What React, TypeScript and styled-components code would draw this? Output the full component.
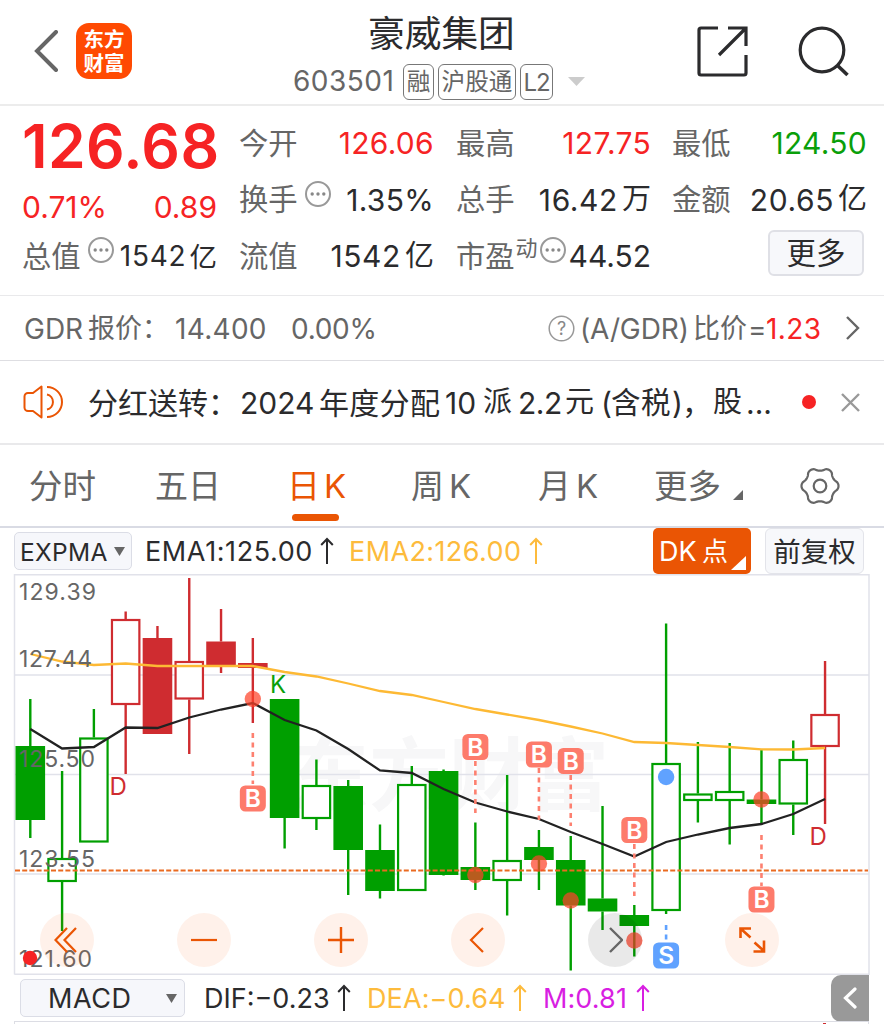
import React from 'react';
import styled, { createGlobalStyle } from 'styled-components';

const RED = '#f62324';
const GREEN = '#0a9f0a';
const ORANGE = '#ea5504';
const GREY = '#666';
const INK = '#2b2b2d';
const YELLOW = '#fdbb3c';

const Global = createGlobalStyle`
  body {
    margin: 0;
    background: #fff;
    overflow: hidden;
    font-family: Inter, "Noto Sans CJK SC", sans-serif;
    color: ${INK};
  }
  * { box-sizing: border-box; }
  svg { display: block; flex: none; }
`;

const Screen = styled.main`
  width: 884px;
  height: 1024px;
  overflow: hidden;
  display: flex;
  flex-direction: column;
  background: #fff;
`;

const Run = styled.span<{ $w?: number; $size: number; $ls?: number; $color?: string; $weight?: number; $drop?: number }>`
  display: block;
  flex: none;
  width: ${p => (p.$w ? `${p.$w}px` : 'auto')};
  margin-top: ${p => (p.$drop ?? 0) * 2}px;
  font-size: ${p => p.$size}px;
  line-height: 1.2;
  letter-spacing: ${p => p.$ls ?? 0}px;
  color: ${p => p.$color ?? 'inherit'};
  font-weight: ${p => p.$weight ?? 400};
  white-space: nowrap;
`;

/* Header */
const Header = styled.header`
  height: 106px;
  flex: none;
  display: grid;
  grid-template-columns: 290px 1fr 290px;
  border-bottom: 2px solid #ececec;
`;
const HeaderLeft = styled.div`
  display: flex;
  align-items: center;
  padding-left: 34px;
  gap: 17px;
  height: 102px;
`;
const Logo = styled.div`
  width: 56px;
  height: 56px;
  border-radius: 13px;
  background: #ff4a02;
  color: #fff;
  font-size: 20.5px;
  font-weight: 700;
  line-height: 23.5px;
  padding-top: 5px;
  text-align: center;
`;
const HeaderTitle = styled.div`
  display: flex;
  flex-direction: column;
  padding-top: 12px;
`;
const StockName = styled.h1`
  margin: 0 0 0 78px;
  font-size: 36.7px;
  line-height: 44px;
  font-weight: 400;
  white-space: nowrap;
`;
const CodeRow = styled.div`
  display: flex;
  align-items: center;
  margin: 7px 0 0 3px;
  height: 37px;
`;
const Tag = styled.span<{ $w: number; $latin?: boolean }>`
  width: ${p => p.$w}px;
  height: 36px;
  flex: none;
  margin-right: 4px;
  border: 1.5px solid #777;
  border-radius: 6px;
  color: ${GREY};
  font-size: ${p => (p.$latin ? 24 : 23.6)}px;
  line-height: ${p => (p.$latin ? 35 : 34)}px;
  letter-spacing: ${p => (p.$latin ? -1 : 0)}px;
  display: flex;
  justify-content: center;
  white-space: nowrap;
`;
const HeaderRight = styled.div`
  display: flex;
  align-items: center;
  justify-content: flex-end;
  gap: 50px;
  padding-right: 35px;
  height: 103px;
`;

/* Quote */
const Quote = styled.section`
  height: 190px;
  flex: none;
  display: grid;
  grid-template-columns: 195px 194px 194px 193px;
  column-gap: 23px;
  padding: 9px 0 0 22px;
  border-bottom: 1.5px solid #e9e9eb;
`;
const QuoteColumn = styled.div<{ $pull?: number }>`
  display: flex;
  flex-direction: column;
  margin-left: ${p => -(p.$pull ?? 0)}px;
`;
const QuoteRow = styled.div<{ $h?: number }>`
  height: ${p => p.$h ?? 56.5}px;
  display: flex;
  align-items: center;
  justify-content: space-between;
`;
const Group = styled.div<{ $gap?: number }>`
  display: flex;
  align-items: center;
  gap: ${p => p.$gap ?? 0}px;
`;
const Raised = styled.span<{ $up: number; $ml?: number }>`
  display: flex;
  align-items: center;
  margin: 0 0 ${p => p.$up}px ${p => p.$ml ?? 0}px;
`;
const MoreButton = styled.button`
  width: 96px;
  height: 46px;
  margin: -7px 3px 0 auto;
  padding: 0;
  border: 2px solid #dfe0e6;
  border-radius: 6px;
  background: #f7f8fb;
  font: 400 29.5px/42px Inter, "Noto Sans CJK SC", sans-serif;
  color: ${INK};
`;

/* Rows below the quote */
const Gdr = styled.section`
  height: 65px;
  flex: none;
  display: flex;
  align-items: center;
  padding-left: 24px;
  color: ${GREY};
  border-bottom: 1.5px solid #dedee2;
`;
const Notice = styled.section`
  height: 84px;
  flex: none;
  display: flex;
  align-items: center;
  padding-left: 23px;
  border-bottom: 2px solid #e9e9eb;
`;
const RedDot = styled.i`
  width: 14px;
  height: 14px;
  flex: none;
  border-radius: 50%;
  background: ${RED};
`;
const Tabs = styled.nav`
  height: 83px;
  flex: none;
  display: flex;
  align-items: center;
  padding-left: 29px;
  border-bottom: 2px solid #d9dbe4;
`;
const Tab = styled.a<{ $w: number; $active?: boolean }>`
  position: relative;
  width: ${p => p.$w}px;
  height: 81px;
  padding-top: 2px;
  flex: none;
  display: flex;
  align-items: center;
  color: ${p => (p.$active ? ORANGE : GREY)};
`;
const Underline = styled.i`
  position: absolute;
  left: 5px;
  bottom: 5px;
  width: 47px;
  height: 7px;
  border-radius: 4px;
  background: ${ORANGE};
`;

/* Indicator bars */
const IndicatorBar = styled.div`
  height: 46px;
  flex: none;
  display: flex;
  align-items: center;
  padding-left: 14px;
`;
const Picker = styled.div<{ $w: number; $pad: number }>`
  width: ${p => p.$w}px;
  height: 38px;
  flex: none;
  display: flex;
  align-items: center;
  padding-left: ${p => p.$pad}px;
  border: 1.5px solid #dbdde6;
  border-radius: 5px;
  background: #f6f7fb;
`;
const DkButton = styled.div`
  position: relative;
  width: 98px;
  height: 46px;
  flex: none;
  display: flex;
  align-items: center;
  padding-left: 6px;
  border-radius: 5px;
  background: ${ORANGE};
  color: #fff;
`;
const Corner = styled.span`
  position: absolute;
  right: 5px;
  bottom: 4px;
`;
const AdjustButton = styled.div`
  width: 99px;
  height: 46px;
  flex: none;
  margin-left: 14px;
  display: flex;
  align-items: center;
  justify-content: center;
  border: 1.5px solid #e3e4ea;
  border-radius: 6px;
  background: #f7f8fb;
`;
const ChartArea = styled.section`
  position: relative;
  height: 401px;
  flex: none;
`;
const Controls = styled.div`
  position: absolute;
  left: 40px;
  top: 339px;
  display: flex;
  gap: 83px;
`;
const RoundButton = styled.span<{ $muted?: boolean }>`
  width: 54px;
  height: 54px;
  border-radius: 50%;
  display: flex;
  align-items: center;
  justify-content: center;
  background: ${p => (p.$muted ? 'rgba(0,0,0,.085)' : 'rgba(250,100,20,.09)')};
`;
const MacdBar = styled.div`
  height: 46px;
  flex: none;
  display: flex;
  align-items: center;
  padding-left: 20px;
`;
const SideHandle = styled.div`
  width: 38px;
  height: 47px;
  margin-left: auto;
  margin-right: 15px;
  flex: none;
  display: flex;
  align-items: center;
  justify-content: center;
  border-radius: 10px 0 0 10px;
  background: #999;
`;
const SubChart = styled.div`
  margin: 0 15px 0 14px;
  height: 6px;
  border: 1.5px solid #dcdde4;
  border-bottom: 0;
  padding-left: 808px;
`;
const Spike = styled.i`
  display: block;
  width: 3px;
  height: 2px;
  margin-top: 1px;
  background: #cf2c30;
`;
const Space = styled.i<{ $w: number }>`
  width: ${p => p.$w}px;
  flex: none;
`;

const Ellipsis = () => (
  <svg width="26" height="26" viewBox="0 0 26 26">
    <circle cx="13" cy="13" r="12" fill="none" stroke="#999" strokeWidth="2" />
    {[7.2, 13, 18.8].map(x => <circle key={x} cx={x} cy="13" r="1.7" fill="#888" />)}
  </svg>
);

const Up = ({ color }: { color: string }) => (
  <svg width="14" height="28" viewBox="0 0 14 28" fill="none" stroke={color} strokeWidth="2">
    <path d="M7 27V2M1.200 8L7 2l5.800 6" />
  </svg>
);

const Down = ({ w, h, color = '#666' }: { w: number; h: number; color?: string }) => (
  <svg width={w} height={h}><path d={`M0 0H${w}L${w / 2} ${h}Z`} fill={color} /></svg>
);

const gearPath = () => {
  const pts: string[] = [];
  for (let i = 0; i < 120; i++) {
    const t = (i / 120) * Math.PI * 2;
    const c = Math.cos(6 * t);
    const r = 16.9 + 1.6 * Math.sign(c) * Math.pow(Math.abs(c), 0.7);
    pts.push(`${(20 + r * Math.cos(t)).toFixed(2)} ${(20 + r * Math.sin(t)).toFixed(2)}`);
  }
  return `M${pts.join('L')}Z`;
};

/* Chart */
type Candle = [high: number, top: number, bottom: number, low: number, filled: boolean, rising?: boolean];
const candles: Candle[] = [
  [699, 746, 820, 838, true],
  [771, 858, 882, 931, false],
  [709, 737.5, 842.5, 842, false],
  [611.5, 619, 705, 774, false, true],
  [626, 638, 734, 734, true, true],
  [578, 661, 699.5, 754, false, true],
  [609, 641.5, 666, 673, true, true],
  [638, 663, 668, 723, true, true],
  [699, 699, 818, 848.5, true],
  [759.5, 785, 819, 830, false],
  [780, 786, 850, 895, true],
  [824.5, 850, 891, 898.5, true],
  [766, 784, 891, 891, false],
  [769.5, 771, 875, 875.5, true],
  [822.5, 867, 880, 890, true],
  [775, 860, 881, 915.5, false],
  [830, 847, 860, 890, true],
  [836, 860, 905.5, 970.5, true],
  [806, 898.5, 911.5, 930, true],
  [905, 915, 926, 956.5, true],
  [623.5, 763, 911, 914, false],
  [742, 793.5, 801, 822.5, false],
  [743, 791, 801, 844.5, false],
  [750, 799.5, 804, 823, true],
  [740.5, 759, 804.5, 835, false],
  [661, 714, 747, 824, false, true],
];
const ema1 = [729, 748.5, 747, 727.5, 728, 717.5, 709.5, 703, 720, 730.5, 749, 770.5, 773, 789, 802.5, 811.5, 819, 832, 844, 856.5, 842, 834.5, 828, 824, 814, 799];
const ema2 = [654, 661.5, 665, 663.5, 666, 666, 666, 666, 672, 676.5, 683.5, 691, 695, 702, 709, 714.5, 720, 726.5, 733.5, 742, 743, 745, 747, 749.3, 749.5, 748];
const cx = (i: number) => 30.3 + i * 31.79;
const line = (ys: number[]) => ys.map((y, i) => `${cx(i)},${y}`).join(' ');

/* [candle index, badge centre, dash start, dash end, dot centre] */
const buys: [number, number, number, number, number][] = [
  [7, 798.5, 733, 784, 699],
  [14, 747, 761, 813, 875],
  [16, 754.5, 768, 820, 863.5],
  [17, 761, 775, 826, 900.5],
  [19, 830, 844, 896, 940.5],
  [23, 899.5, 835, 886, 799.5],
];

const Badge = ({ x, y, color, label }: { x: number; y: number; color: string; label: string }) => (
  <g>
    <rect x={x - 13} y={y - 13} width="26" height="26" rx="5.500" fill={color} />
    <text x={x} y={y + 8.7} textAnchor="middle" fontSize="24.500" fontWeight="600" fill="#fff">{label}</text>
  </g>
);

const Chart = () => (
  <svg width="884" height="401" viewBox="0 574 884 401" fontFamily='Inter, "Noto Sans CJK SC", sans-serif'>
    <text x="289" y="804" fontSize="80" fontWeight="700" textLength="320" fill="#f7f7f8">东方财富</text>
    <g stroke="#e1e2ea" strokeWidth="1.500" fill="none">
      <path d="M14.500 974.500V574.700H869V974.300H14.500M14.500 675H869M14.500 774.500H869M14.500 874H869" />
    </g>
    {candles.map(([high, top, bottom, low, filled, rising], i) => {
      const color = rising ? '#cf2c30' : '#009f00';
      const x = cx(i);
      return (
        <g key={i} stroke={color} strokeWidth="2.400">
          <path d={`M${x} ${high}V${top}M${x} ${bottom}V${Math.max(low, bottom)}`} />
          {filled
            ? <rect x={x - 14.8} y={top} width="29.600" height={bottom - top} fill={color} stroke="none" />
            : <rect x={x - 13.7} y={top + 1} width="27.400" height={bottom - top - 2} fill="#fff" strokeWidth="2.200" />}
        </g>
      );
    })}
    <polyline points={line(ema2)} fill="none" stroke="#fdb934" strokeWidth="2.300" />
    <polyline points={line(ema1)} fill="none" stroke="#222" strokeWidth="2.300" />
    <path d="M15 870.500H868" stroke="#ea6a20" strokeWidth="2" strokeDasharray="5 2.200" />
    {buys.map(([i, badge, from, to, dot]) => (
      <g key={i}>
        <path d={`M${cx(i)} ${from}V${to}`} stroke="#fd8070" strokeWidth="2.600" strokeDasharray="5 4.500" />
        <circle cx={cx(i)} cy={dot} r="8.200" fill="rgba(253,66,42,.72)" />
        <Badge x={cx(i)} y={badge} color="#fd7b6b" label="B" />
      </g>
    ))}
    <path d={`M${cx(20)} 925V940`} stroke="#60a2ff" strokeWidth="2.600" strokeDasharray="5 4.500" />
    <circle cx={cx(20)} cy="777" r="8.200" fill="#60a2ff" />
    <Badge x={cx(20)} y={955.5} color="#60a2ff" label="S" />
    <g fontSize="24">
      <text x="270" y="693" fill={GREEN}>K</text>
      <text x="109.500" y="794.500" fill="#cf2c30">D</text>
      <text x="809.500" y="844.500" fill="#cf2c30">D</text>
    </g>
    <g fontSize="23" fill="#666">
      <text x="19" y="600" textLength="77">129.39</text>
      <text x="19" y="667" textLength="73">127.44</text>
      <text x="19" y="767" textLength="76">125.50</text>
      <text x="19" y="867" textLength="76">123.55</text>
      <text x="19" y="966.500" textLength="73">121.60</text>
    </g>
    <circle cx="30" cy="958" r="7.200" fill={RED} />
  </svg>
);

const Pair = ({ label, value, unit, color, info, sup }: { label: string; value: string; unit?: string; color?: string; info?: boolean; sup?: string }) => (
  <QuoteRow>
    <Group>
      <Run $size={29.3} $color={GREY}>{label}</Run>
      {sup && <Raised $up={17} $ml={1}><Run $size={22} $color={GREY}>{sup}</Run></Raised>}
      {info && <Raised $up={12} $ml={sup ? 2 : 7}><Ellipsis /></Raised>}
    </Group>
    <Group $gap={4}>
      <Run $size={30} $color={color} $ls={unit ? 0.6 : sup ? 0 : 0.3}>{value}</Run>
      {unit && <Run $size={29}>{unit}</Run>}
    </Group>
  </QuoteRow>
);

export default function App() {
  return (
    <Screen>
      <Global />
      <Header>
        <HeaderLeft>
          <svg width="25" height="42" viewBox="0 0 25 42" fill="none" stroke={GREY} strokeWidth="4">
            <path d="M22 2L3 21l19 19" strokeLinecap="round" />
          </svg>
          <Logo>东方<br />财富</Logo>
        </HeaderLeft>
        <HeaderTitle>
          <StockName>豪威集团</StockName>
          <CodeRow>
            <Run $size={28} $w={110} $color={GREY} $ls={0.5} $drop={0.5}>603501</Run>
            <Tag $w={31}>融</Tag>
            <Tag $w={78}>沪股通</Tag>
            <Tag $w={33} $latin>L2</Tag>
            <Space $w={11} />
            <Down w={17} h={9} color="#ccc" />
          </CodeRow>
        </HeaderTitle>
        <HeaderRight>
          <svg width="51" height="51" viewBox="0 0 51 51" fill="none" stroke={INK} strokeWidth="3.200">
            <path d="M21 2H4a2 2 0 0 0-2 2V47a2 2 0 0 0 2 2H47a2 2 0 0 0 2-2V29M31 2H49V20M49 2L22 29" />
          </svg>
          <svg width="51" height="51" viewBox="0 0 51 51" fill="none" stroke={INK} strokeWidth="3.200">
            <circle cx="24" cy="24" r="21.800" />
            <path d="M39 39l10.500 10" strokeWidth="3.600" />
          </svg>
        </HeaderRight>
      </Header>

      <Quote>
        <QuoteColumn>
          <QuoteRow $h={63}><Run $size={60.5} $weight={600} $ls={0.4} $color={RED}>126.68</Run></QuoteRow>
          <QuoteRow $h={57}>
            <Run $size={30} $color={RED}>0.71%</Run>
            <Run $size={30} $color={RED}>0.89</Run>
          </QuoteRow>
          <QuoteRow $h={43}>
            <Group>
              <Run $size={29.3} $color={GREY}>总值</Run>
              <Raised $up={14} $ml={7}><Ellipsis /></Raised>
            </Group>
            <Group $gap={3}>
              <Run $size={28} $ls={0.8} $drop={0.5}>1542</Run>
              <Run $size={27.5} $drop={0.5}>亿</Run>
            </Group>
          </QuoteRow>
        </QuoteColumn>
        <QuoteColumn $pull={1}>
          <Pair label="今开" value="126.06" color={RED} />
          <Pair label="换手" value="1.35%" info />
          <Pair label="流值" value="1542" unit="亿" />
        </QuoteColumn>
        <QuoteColumn $pull={1}>
          <Pair label="最高" value="127.75" color={RED} />
          <Pair label="总手" value="16.42" unit="万" />
          <Pair label="市盈" value="44.52" sup="动" info />
        </QuoteColumn>
        <QuoteColumn $pull={2}>
          <Pair label="最低" value="124.50" color={GREEN} />
          <Pair label="金额" value="20.65" unit="亿" />
          <QuoteRow><MoreButton>更多</MoreButton></QuoteRow>
        </QuoteColumn>
      </Quote>

      <Gdr>
        <Run $size={28} $w={64} $drop={1.5}>GDR</Run>
        <Run $size={27} $w={87} $drop={1}>报价：</Run>
        <Run $size={28} $w={116} $ls={0.3} $drop={1.5}>14.400</Run>
        <Run $size={28} $w={257} $ls={-0.3} $drop={1.5}>0.00%</Run>
        <svg width="27" height="27" viewBox="0 0 27 27">
          <circle cx="13.500" cy="13.500" r="12.300" fill="none" stroke="#999" strokeWidth="1.500" />
          <text x="13.500" y="20" textAnchor="middle" fontSize="18" fill="#888">?</text>
        </svg>
        <Space $w={5} />
        <Run $size={28} $w={113} $ls={-0.1} $drop={1.5}>(A/GDR)</Run>
        <Run $size={27} $w={55} $drop={1}>比价</Run>
        <Run $size={28} $w={18} $drop={1.5}>=</Run>
        <Run $size={28} $w={79} $ls={0.4} $drop={1.5} $color={RED}>1.23</Run>
        <svg width="15" height="26" viewBox="0 0 15 26" fill="none" stroke={GREY} strokeWidth="2.400">
          <path d="M2 2l11 11L2 24" />
        </svg>
      </Gdr>

      <Notice>
        <svg width="42" height="36" viewBox="0 0 42 36" fill="none" stroke={ORANGE} strokeWidth="2">
          <path d="M18.500 2.500V33.500L10 27H5a3.500 3.500 0 0 1-3.500-3.500V12.500A3.500 3.500 0 0 1 5 9H10Z" strokeLinejoin="round" />
          <path d="M24 10.500a7.700 7.700 0 0 1 0 15M24 3a15 15 0 0 1 0 30" />
        </svg>
        <Space $w={23} />
        <Run $size={30} $w={152} $drop={0.5}>分红送转：</Run>
        <Run $size={30} $w={79} $drop={0.5}>2024</Run>
        <Run $size={30} $w={126} $ls={0.3} $drop={0.5}>年度分配</Run>
        <Run $size={30} $w={38} $drop={0.5}>10</Run>
        <Run $size={29} $w={35} $drop={0.5}>派</Run>
        <Run $size={30} $w={47} $ls={-0.5} $drop={0.5}>2.2</Run>
        <Run $size={29} $w={36} $drop={0.5}>元</Run>
        <Run $size={30} $w={10} $drop={0.5}>(</Run>
        <Run $size={29.5} $w={61} $ls={0.5} $drop={0.5}>含税</Run>
        <Run $size={30} $w={10} $drop={0.5}>)</Run>
        <Run $size={30} $w={31} $drop={0.5}>，</Run>
        <Run $size={29} $w={33} $drop={0.5}>股</Run>
        <Run $size={30} $w={56} $drop={0.5}>...</Run>
        <RedDot />
        <Space $w={24} />
        <svg width="21" height="21" viewBox="0 0 21 21" stroke="#999" strokeWidth="2.400">
          <path d="M2 2l17 17M19 2L2 19" />
        </svg>
      </Notice>

      <Tabs>
        <Tab $w={126}><Run $size={33.5}>分时</Run></Tab>
        <Tab $w={132}><Run $size={33}>五日</Run></Tab>
        <Tab $w={124} $active>
          <Run $size={33} $w={37}>日</Run><Run $size={33}>K</Run>
          <Underline />
        </Tab>
        <Tab $w={127}><Run $size={33} $w={38}>周</Run><Run $size={33}>K</Run></Tab>
        <Tab $w={116}><Run $size={33} $w={38}>月</Run><Run $size={33}>K</Run></Tab>
        <Tab $w={79}><Run $size={33.5}>更多</Run></Tab>
        <svg width="10" height="32" viewBox="0 0 10 32"><path d="M10 20V30H0Z" fill={GREY} /></svg>
        <Space $w={57} />
        <svg width="40" height="40" viewBox="0 0 40 40" fill="none" stroke={GREY} strokeWidth="2.200">
          <path d={gearPath()} />
          <circle cx="20" cy="20" r="6.300" />
        </svg>
      </Tabs>

      <IndicatorBar>
        <Picker $w={118} $pad={5}>
          <Run $size={24.5} $w={94} $ls={0.3} $drop={1.5}>EXPMA</Run>
          <Down w={11} h={9} />
        </Picker>
        <Space $w={13} />
        <Run $size={27} $w={175} $ls={0.6} $drop={1}>EMA1:125.00</Run>
        <Up color={INK} />
        <Space $w={15} />
        <Run $size={27} $w={180} $ls={0.4} $drop={1} $color={YELLOW}>EMA2:126.00</Run>
        <Up color={YELLOW} />
        <Space $w={110} />
        <DkButton>
          <Run $size={27} $w={43} $drop={1}>DK</Run>
          <Run $size={26} $drop={1}>点</Run>
          <Corner><svg width="15" height="14"><path d="M15 0V14H0Z" fill="#fff" /></svg></Corner>
        </DkButton>
        <AdjustButton><Run $size={27.5} $drop={1}>前复权</Run></AdjustButton>
      </IndicatorBar>

      <ChartArea>
        <Chart />
        <Controls>
          <RoundButton>
            <svg width="26" height="28" viewBox="0 0 26 28" fill="none" stroke={ORANGE} strokeWidth="2.200">
              <path d="M13 2L1.500 14L13 26M22 2L10.500 14L22 26" />
            </svg>
          </RoundButton>
          <RoundButton>
            <svg width="26" height="26" stroke={ORANGE} strokeWidth="2.200"><path d="M0 13H26" /></svg>
          </RoundButton>
          <RoundButton>
            <svg width="26" height="26" stroke={ORANGE} strokeWidth="2.400"><path d="M0 13H26M13 0V26" /></svg>
          </RoundButton>
          <RoundButton>
            <svg width="18" height="26" fill="none" stroke={ORANGE} strokeWidth="2.200"><path d="M14 1L2 13l12 12" /></svg>
          </RoundButton>
          <RoundButton $muted>
            <svg width="16" height="26" fill="none" stroke={GREY} strokeWidth="2.400"><path d="M3 1l12 12L3 25" /></svg>
          </RoundButton>
          <RoundButton>
            <svg width="28" height="28" fill="none" stroke={ORANGE} strokeWidth="2.600">
              <path d="M2.500 12V2.500H13M2.500 2.500L12.500 11.500M16.500 16.500L26 25M26 14.500V25.500H15.500" />
            </svg>
          </RoundButton>
        </Controls>
      </ChartArea>

      <MacdBar>
        <Picker $w={165} $pad={27}>
          <Run $size={27} $w={118} $ls={0.6} $drop={1.5}>MACD</Run>
          <Down w={11} h={9} />
        </Picker>
        <Space $w={19} />
        <Run $size={27} $w={133} $drop={1.5}>DIF:−0.23</Run>
        <Up color={INK} />
        <Space $w={16} />
        <Run $size={27} $w={146} $ls={0.1} $drop={1.5} $color={YELLOW}>DEA:−0.64</Run>
        <Up color={YELLOW} />
        <Space $w={16} />
        <Run $size={27} $w={93} $ls={0.1} $drop={1.5} $color="#d81ee2">M:0.81</Run>
        <Up color="#d81ee2" />
        <SideHandle>
          <svg width="14" height="22" fill="none" stroke="#fff" strokeWidth="3.200" strokeLinecap="round"><path d="M12 2L2.500 11L12 20" /></svg>
        </SideHandle>
      </MacdBar>
      <SubChart><Spike /></SubChart>
    </Screen>
  );
}
